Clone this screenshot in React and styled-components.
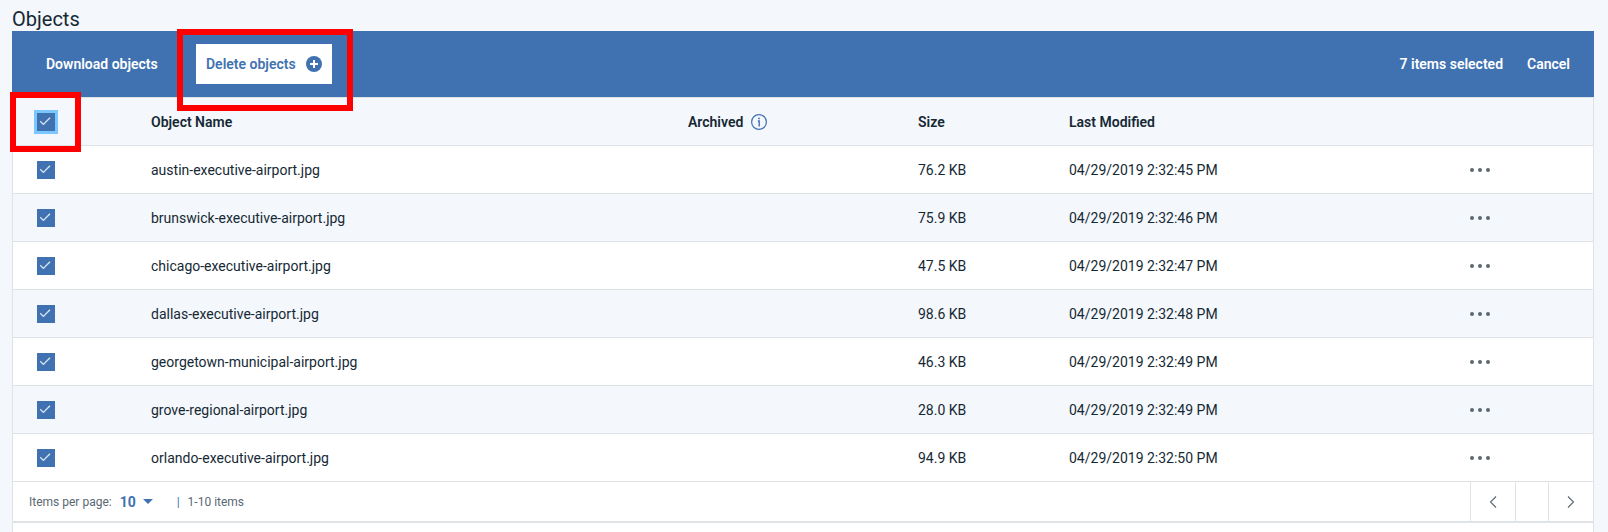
import React from "react";
import styled, { createGlobalStyle, css } from "styled-components";

const blue = "#4072b1";
const ink = "#152935";
const muted = "#5a6872";
const line = "#dfe3e6";
const pale = "#f4f7fb";

const GlobalStyle = createGlobalStyle`
  *, *::before, *::after { box-sizing: border-box; }
  body {
    margin: 0;
    background: ${pale};
    color: ${ink};
    font-family: Roboto, "Liberation Sans", sans-serif;
    font-size: 14px;
    line-height: 20px;
  }
  button, input, select { font: inherit; margin: 0; }
`;

const Page = styled.main`
  display: flex;
  flex-direction: column;
  min-height: 100vh;
  padding: 7px 14px 0 12px;
`;

const Title = styled.h1`
  margin: 0;
  font-size: 20px;
  line-height: 24px;
  font-weight: 400;
`;

const Toolbar = styled.div`
  display: flex;
  align-items: center;
  justify-content: space-between;
  height: 66px;
  padding: 0 24px;
  background: ${blue};
  color: #fff;
  font-weight: 600;
`;

const ToolbarGroup = styled.div`
  display: flex;
  align-items: center;
  gap: 24px;
`;

const ToolbarButton = styled.button`
  display: flex;
  align-items: center;
  justify-content: space-between;
  min-width: ${(p) => (p.$flush ? "0" : "136px")};
  height: 40px;
  padding: ${(p) => (p.$flush ? "0" : "0 10px")};
  border: 0;
  background: ${(p) => (p.$active ? "#fff" : "transparent")};
  color: ${(p) => (p.$active ? blue : "#fff")};
  font-weight: 600;
  white-space: nowrap;
  cursor: pointer;
`;

const Marked = styled.div`
  position: relative;
`;

const Highlight = styled.span`
  position: absolute;
  z-index: 1;
  border: 6px solid #f00;
  pointer-events: none;
  ${(p) =>
    p.$small
      ? css`
          inset: -21px -26px -21px -27px;
        `
      : css`
          inset: -15px -21px -27px -19px;
        `}
`;

const Panel = styled.section`
  flex: 1;
  border: 1px solid ${line};
  border-bottom: 0;
  background: #fff;
`;

const Table = styled.table`
  width: 100%;
  table-layout: fixed;
  border-collapse: separate;
  border-spacing: 0;
`;

const Column = styled.col`
  width: ${(p) => (p.$width ? `${p.$width}px` : "auto")};
`;

const Row = styled.tr`
  background: ${(p) => (p.$tinted ? pale : "#fff")};
`;

const cell = css`
  height: 48px;
  padding: 0 0 0 24px;
  border-bottom: 1px solid ${line};
  text-align: left;
  white-space: nowrap;
`;

const HeadCell = styled.th`
  ${cell}
  font-weight: 600;
`;

const Cell = styled.td`
  ${cell}
`;

const HeadLabel = styled.span`
  display: flex;
  align-items: center;
  gap: 8px;
`;

const CheckWrap = styled.label`
  position: relative;
  display: grid;
  width: 18px;
  height: 18px;
  & > * { grid-area: 1 / 1; }
  & > svg { pointer-events: none; }
`;

const CheckBox = styled.input`
  appearance: none;
  width: 18px;
  height: 18px;
  background: ${blue};
  box-shadow: ${(p) => (p.$focused ? "0 0 0 3px #7cc7ff" : "none")};
`;

const IconButton = styled.button`
  display: flex;
  padding: 0;
  border: 0;
  background: none;
  cursor: pointer;
`;

const Footer = styled.footer`
  display: flex;
  justify-content: space-between;
  height: 41px;
  padding-left: 16px;
  border-bottom: 2px solid ${line};
  color: ${muted};
  font-size: 12px;
`;

const PageInfo = styled.div`
  display: flex;
  align-items: center;
`;

const SizePicker = styled.span`
  display: flex;
  align-items: center;
  margin-right: 16px;
  color: ${blue};
`;

const SizeSelect = styled.select`
  appearance: none;
  width: 41px;
  margin-right: -10px;
  padding: 0 0 0 8px;
  border: 0;
  background: transparent;
  color: ${blue};
  font-size: 14px;
  font-weight: 700;
`;

const Range = styled.span`
  padding-left: 8px;
  &::before {
    content: "|";
    margin-right: 8px;
    color: ${blue};
  }
`;

const Pager = styled.nav`
  display: flex;
`;

const PagerSlot = styled.span`
  width: 33px;
  border-left: 1px solid ${line};
`;

const PagerButton = styled.button`
  display: flex;
  align-items: center;
  justify-content: center;
  width: 45px;
  padding: 0;
  border: 0;
  border-left: 1px solid ${line};
  background: transparent;
  color: ${muted};
  cursor: pointer;
`;

const PlusIcon = () => (
  <svg width="16" height="16" viewBox="0 0 16 16" aria-hidden="true">
    <circle cx="8" cy="8" r="8" fill={blue} />
    <path d="M8 4v8M4 8h8" stroke="#fff" strokeWidth="2" />
  </svg>
);

const InfoIcon = () => (
  <svg width="16" height="16" viewBox="0 0 16 16" fill="none" stroke={blue} aria-hidden="true">
    <circle cx="8" cy="8" r="7.4" strokeWidth="1.2" />
    <path d="M6.8 7H8.2V12.4" strokeWidth="1.4" />
    <circle cx="8" cy="4.4" r="0.9" fill={blue} stroke="none" />
  </svg>
);

const CheckIcon = () => (
  <svg width="18" height="18" viewBox="0 0 18 18" fill="none" aria-hidden="true">
    <path d="M3.2 8.3L6.4 11.4L13 4.8" stroke="#dce8f5" strokeWidth="1.3" />
  </svg>
);

const DotsIcon = () => (
  <svg width="20" height="4" viewBox="0 0 20 4" fill={muted} aria-hidden="true">
    <circle cx="2" cy="2" r="2" />
    <circle cx="10" cy="2" r="2" />
    <circle cx="18" cy="2" r="2" />
  </svg>
);

const CaretIcon = () => (
  <svg width="10" height="5" viewBox="0 0 10 5" fill={blue} aria-hidden="true">
    <path d="M0 0H10L5 5Z" />
  </svg>
);

const Chevron = ({ d }) => (
  <svg width="8" height="12" viewBox="0 0 8 12" fill="none" stroke="currentColor" aria-hidden="true">
    <path d={d} strokeWidth="1.1" />
  </svg>
);

const Check = ({ label, focused }) => (
  <CheckWrap>
    <CheckBox type="checkbox" defaultChecked aria-label={label} $focused={focused} />
    <CheckIcon />
    {focused && <Highlight $small />}
  </CheckWrap>
);

const objects = [
  ["austin-executive-airport.jpg", "76.2 KB", "04/29/2019 2:32:45 PM"],
  ["brunswick-executive-airport.jpg", "75.9 KB", "04/29/2019 2:32:46 PM"],
  ["chicago-executive-airport.jpg", "47.5 KB", "04/29/2019 2:32:47 PM"],
  ["dallas-executive-airport.jpg", "98.6 KB", "04/29/2019 2:32:48 PM"],
  ["georgetown-municipal-airport.jpg", "46.3 KB", "04/29/2019 2:32:49 PM"],
  ["grove-regional-airport.jpg", "28.0 KB", "04/29/2019 2:32:49 PM"],
  ["orlando-executive-airport.jpg", "94.9 KB", "04/29/2019 2:32:50 PM"],
];

export default function App() {
  return (
    <Page>
      <GlobalStyle />
      <Title>Objects</Title>
      <Toolbar>
        <ToolbarGroup>
          <ToolbarButton>Download objects</ToolbarButton>
          <Marked>
            <ToolbarButton $active>
              Delete objects
              <PlusIcon />
            </ToolbarButton>
            <Highlight />
          </Marked>
        </ToolbarGroup>
        <ToolbarGroup>
          <span>7 items selected</span>
          <ToolbarButton $flush>Cancel</ToolbarButton>
        </ToolbarGroup>
      </Toolbar>
      <Panel>
        <Table>
          <colgroup>
            <Column $width={114} />
            <Column />
            <Column $width={230} />
            <Column $width={151} />
            <Column $width={401} />
            <Column $width={147} />
          </colgroup>
          <thead>
            <Row $tinted>
              <HeadCell>
                <Check label="Select all objects" focused />
              </HeadCell>
              <HeadCell>Object Name</HeadCell>
              <HeadCell>
                <HeadLabel>
                  Archived
                  <InfoIcon />
                </HeadLabel>
              </HeadCell>
              <HeadCell>Size</HeadCell>
              <HeadCell>Last Modified</HeadCell>
              <HeadCell />
            </Row>
          </thead>
          <tbody>
            {objects.map(([name, size, modified], i) => (
              <Row key={name} $tinted={i % 2 === 1}>
                <Cell>
                  <Check label={`Select ${name}`} />
                </Cell>
                <Cell>{name}</Cell>
                <Cell />
                <Cell>{size}</Cell>
                <Cell>{modified}</Cell>
                <Cell>
                  <IconButton aria-label={`Actions for ${name}`}>
                    <DotsIcon />
                  </IconButton>
                </Cell>
              </Row>
            ))}
          </tbody>
        </Table>
        <Footer>
          <PageInfo>
            <label htmlFor="page-size">Items per page:</label>
            <SizePicker>
              <SizeSelect id="page-size" defaultValue="10">
                <option>10</option>
                <option>20</option>
                <option>50</option>
              </SizeSelect>
              <CaretIcon />
            </SizePicker>
            <Range>1-10 items</Range>
          </PageInfo>
          <Pager aria-label="Pagination">
            <PagerButton aria-label="Previous page">
              <Chevron d="M7 0.5L1.5 6L7 11.5" />
            </PagerButton>
            <PagerSlot />
            <PagerButton aria-label="Next page">
              <Chevron d="M1 0.5L6.5 6L1 11.5" />
            </PagerButton>
          </Pager>
        </Footer>
      </Panel>
    </Page>
  );
}
